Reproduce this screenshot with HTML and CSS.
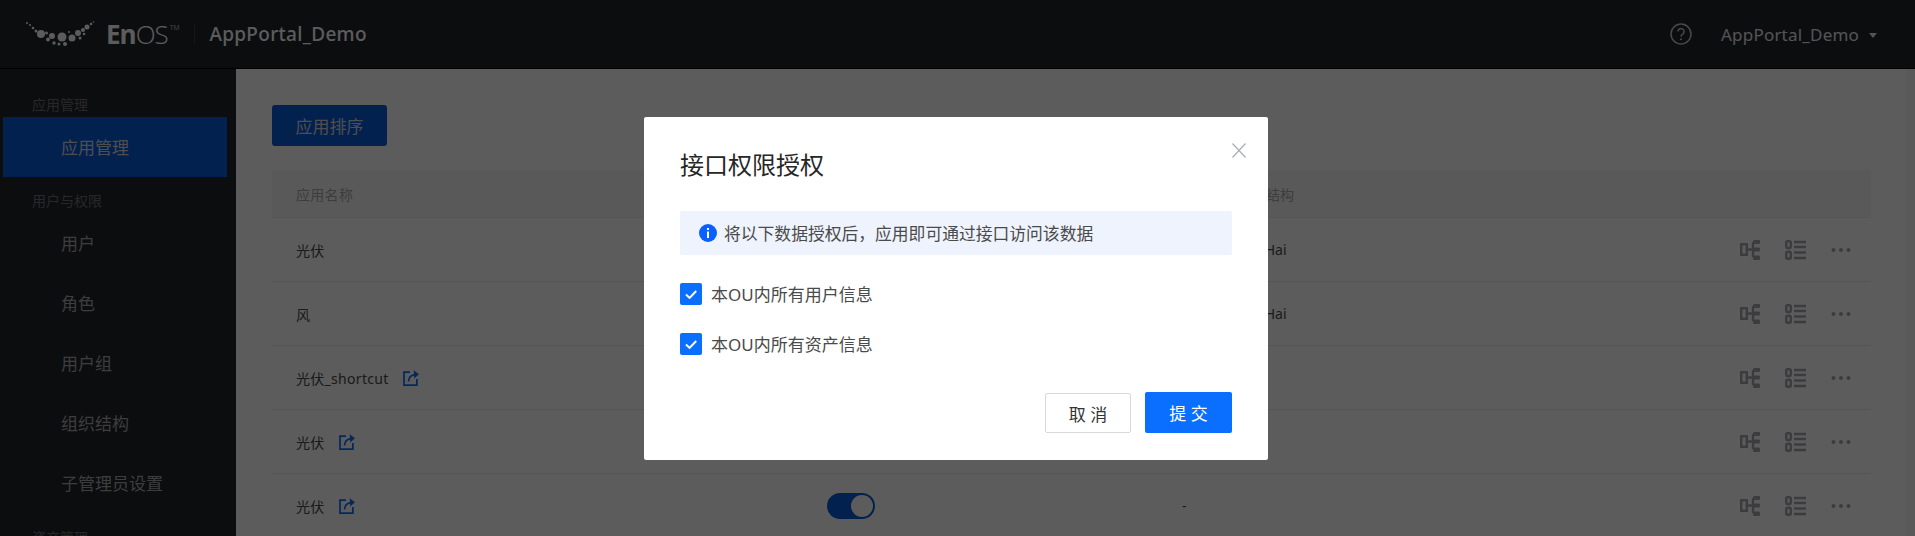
FILE: index.html
```html
<!DOCTYPE html>
<html lang="zh-CN">
<head>
  <meta charset="UTF-8">
  <title>EnOS AppPortal_Demo</title>
  <link rel="stylesheet" href="styles.css">
</head>
<body>

<header class="topbar">
  <div class="brand">
    <svg class="brand-mark" viewBox="0 0 70 26" width="70" height="26">
      <g fill="#fff">
        <circle cx="2" cy="2" r="1"/><circle cx="5" cy="4" r="1"/><circle cx="8" cy="7" r="1.300"/>
        <circle cx="11" cy="10" r="1.500"/><circle cx="16" cy="13" r="4"/><circle cx="21.500" cy="12" r="1.500"/>
        <circle cx="27" cy="15" r="3"/><circle cx="23" cy="18.500" r="2"/><circle cx="29" cy="22" r="1.700"/>
        <circle cx="34" cy="23" r="1.500"/><circle cx="37" cy="16" r="4.500"/><circle cx="40" cy="23" r="2"/>
        <circle cx="47" cy="17" r="3.500"/><circle cx="44" cy="11" r="1"/><circle cx="53" cy="12" r="3"/>
        <circle cx="55" cy="17" r="1.500"/><circle cx="59" cy="13" r="1.300"/><circle cx="58" cy="9" r="2"/>
        <circle cx="62" cy="6" r="2.500"/><circle cx="66" cy="3" r="1.300"/><circle cx="68.500" cy="1" r="0.800"/>
      </g>
    </svg>
    <span class="brand-name"><b>En</b>OS<sup>TM</sup></span>
    <span class="brand-line"></span>
    <span class="brand-app">AppPortal_Demo</span>
  </div>
  <div class="account">
    <svg class="help" viewBox="0 0 22 22" width="22" height="22">
      <circle cx="11" cy="11" r="10" fill="none" stroke="#fff" stroke-width="1.500"/>
      <path d="M8 8.600a3 3 0 1 1 4.600 2.500c-1 .7-1.600 1.200-1.600 2.600" fill="none" stroke="#fff" stroke-width="1.500"/>
      <circle cx="11" cy="16.300" r="1" fill="#fff"/>
    </svg>
    <span class="account-name">AppPortal_Demo</span>
    <span class="caret"></span>
  </div>
</header>

<div class="page">
  <aside class="sidebar">
    <ul class="nav">
      <li class="nav-group nav-first">应用管理</li>
      <li class="nav-item active">应用管理</li>
      <li class="nav-group">用户与权限</li>
      <li class="nav-item">用户</li>
      <li class="nav-item">角色</li>
      <li class="nav-item">用户组</li>
      <li class="nav-item">组织结构</li>
      <li class="nav-item">子管理员设置</li>
      <li class="nav-group">资产管理</li>
    </ul>
  </aside>

  <main class="content">
    <button class="btn-sort">应用排序</button>
    <div class="table" id="table">
      <div class="row row-head">
        <div class="cell-name">应用名称</div>
        <div class="cell-state">状态</div>
        <div class="cell-org">应用所属组织结构</div>
        <div class="cell-ops"></div>
      </div>
    </div>
  </main>
  <div class="scrollbar"></div>
</div>

<div class="mask"></div>

<div class="dialog">
  <svg class="dialog-close" viewBox="0 0 14 15" width="14" height="15">
    <path d="M.5.5l13 14M13.500.5l-13 14" fill="none" stroke="#a8adb8" stroke-width="1.200"/>
  </svg>
  <h2 class="dialog-title">接口权限授权</h2>
  <div class="notice">
    <svg viewBox="0 0 18 18" width="18" height="18">
      <circle cx="9" cy="9" r="9" fill="#0a5fff"/>
      <rect x="8" y="4" width="2" height="2" fill="#fff"/>
      <rect x="8" y="7.500" width="2" height="6.500" fill="#fff"/>
    </svg>
    <span>将以下数据授权后，应用即可通过接口访问该数据</span>
  </div>
  <label class="check">
    <span class="check-box">
      <svg viewBox="0 0 22 22" width="22" height="22"><path d="M6 11.500l3.600 3.400L16.200 8" fill="none" stroke="#fff" stroke-width="2"/></svg>
    </span>
    <span class="check-text">本OU内所有用户信息</span>
  </label>
  <label class="check">
    <span class="check-box">
      <svg viewBox="0 0 22 22" width="22" height="22"><path d="M6 11.500l3.600 3.400L16.200 8" fill="none" stroke="#fff" stroke-width="2"/></svg>
    </span>
    <span class="check-text">本OU内所有资产信息</span>
  </label>
  <div class="dialog-foot">
    <button class="btn btn-cancel">取 消</button>
    <button class="btn btn-submit">提 交</button>
  </div>
</div>

<script>
  const rows = [
    { name: "光伏", link: false, org: "Envision_HaiHai" },
    { name: "风", link: false, org: "Envision_HaiHai" },
    { name: "光伏_shortcut", link: true, org: "-" },
    { name: "光伏", link: true, org: "-" },
    { name: "光伏", link: true, org: "-" }
  ];

  const linkIcon = `<svg class="link" viewBox="0 0 16 16" width="16" height="16">
    <path d="M7 2.200H1v12.900h12.900V9" fill="none" stroke="#0a6fff" stroke-width="1.700"/>
    <path d="M5.500 11.500C5.800 7.500 8.500 5 12 4.700" fill="none" stroke="#0a6fff" stroke-width="1.700"/>
    <path d="M10.800 .3L16 4.200 11.200 8.500z" fill="#0a6fff"/>
  </svg>`;

  const opsIcons = `
    <svg viewBox="0 0 20 20" width="20" height="20">
      <g fill="none" stroke="#a5a6ad" stroke-width="2.400">
        <rect x="1.200" y="4.200" width="5.600" height="10.600"/>
        <path d="M7 9.500h6M13 2v15"/>
      </g>
      <g fill="#a5a6ad">
        <rect x="13" y="0" width="7" height="4" rx="1"/>
        <rect x="13" y="7.500" width="7" height="4" rx="1"/>
        <rect x="13" y="15.500" width="7" height="4.500" rx="1"/>
      </g>
    </svg>
    <svg viewBox="0 0 21 20" width="21" height="20">
      <g fill="none" stroke="#a5a6ad" stroke-width="2.400">
        <rect x="1.200" y="1.200" width="4.600" height="6.800" rx="1.500"/>
        <rect x="1.200" y="11.800" width="4.600" height="7" rx="1.500"/>
      </g>
      <path d="M9 2h12M9 7h12M9 12.500h12M9 18h12" stroke="#a5a6ad" stroke-width="2.400"/>
    </svg>
    <svg viewBox="0 0 20 20" width="20" height="20">
      <g fill="#a5a6ad"><circle cx="2.500" cy="10" r="2"/><circle cx="10" cy="10" r="2"/><circle cx="17.500" cy="10" r="2"/></g>
    </svg>`;

  const table = document.getElementById("table");
  rows.forEach((r) => {
    const div = document.createElement("div");
    div.className = "row";
    div.innerHTML = `
      <div class="cell-name">${r.name}${r.link ? linkIcon : ""}</div>
      <div class="cell-state"><span class="toggle"></span></div>
      <div class="cell-org">${r.org}</div>
      <div class="cell-ops">${opsIcons}</div>`;
    table.appendChild(div);
  });
</script>

</body>
</html>
```

FILE: styles.css
```css
* {
  box-sizing: border-box;
}

html, body {
  height: 100%;
}

body {
  margin: 0;
  overflow: hidden;
  background: #fff;
  color: #4a4a4a;
  font-family: "Noto Sans", "Noto Sans CJK SC", sans-serif;
  font-size: 14px;
}

.topbar {
  height: 69px;
  background: #22252c;
  border-bottom: 1px solid #000;
  display: flex;
  align-items: center;
  justify-content: space-between;
  padding: 0 38px 0 25px;
  color: #fff;
}

.brand,
.account {
  display: flex;
  align-items: center;
}

.brand-name {
  margin-left: 11px;
  font-family: "Open Sans", sans-serif;
  font-size: 26px;
  font-weight: 300;
  letter-spacing: -1px;
  line-height: 30px;
  color: #fff;
}

.brand-name b {
  font-weight: 700;
}

.brand-name sup {
  font-size: 7px;
  letter-spacing: 0;
  vertical-align: 14px;
  line-height: 0;
  margin-left: 2px;
}

.brand-line {
  width: 1px;
  height: 20px;
  margin: 0 14px 0 15px;
  background: #3a3d45;
}

.brand-app {
  font-size: 19px;
  font-weight: 500;
  letter-spacing: 0.3px;
  color: #fff;
}

.help {
  opacity: 0.75;
  margin-right: 29px;
}

.account-name {
  font-size: 17px;
  letter-spacing: 0.2px;
  color: #e8e8e8;
}

.caret {
  width: 0;
  height: 0;
  margin: 3px 0 0 10px;
  border-left: 4.500px solid transparent;
  border-right: 4.500px solid transparent;
  border-top: 5px solid #e8e8e8;
}

.page {
  display: flex;
  height: calc(100% - 69px);
}

.sidebar {
  width: 236px;
  flex: none;
  background: #22252c;
  padding-right: 9px;
}

.nav {
  list-style: none;
  margin: 0;
  padding: 0;
}

.nav-group {
  height: 37px;
  padding: 14px 0 0 32px;
  line-height: 20px;
  color: #707070;
}

.nav-first {
  height: 48px;
  padding-top: 26px;
}

.nav-item {
  height: 60px;
  line-height: 60px;
  margin-left: 3px;
  padding-left: 58px;
  font-size: 17px;
  color: #a8a8a8;
}

.nav-item.active {
  line-height: 62px;
  background: #0a5cd8;
  color: #d8d8d8;
}

.content {
  flex: 1;
  padding: 36px 36px 0;
  min-width: 0;
}

.scrollbar {
  width: 8px;
  flex: none;
  background: #f7f7f7;
}

.btn-sort {
  display: block;
  width: 115px;
  height: 41px;
  padding: 0;
  border: none;
  border-radius: 3px;
  background: #0a5cd8;
  color: #d8d8d8;
  font-family: inherit;
  font-size: 17px;
}

.table {
  margin-top: 24px;
}

.row {
  display: grid;
  grid-template-columns: 531px 355px 1fr 131px;
  align-items: center;
  height: 64px;
  padding-left: 24px;
  border-bottom: 1px solid #ececec;
}

.row-head {
  height: 48px;
  background: #f7f7f7;
  color: #a8a8a8;
}

.cell-name {
  display: flex;
  align-items: center;
  letter-spacing: 0.3px;
}

.link {
  margin-left: 14px;
}

.toggle {
  display: block;
  position: relative;
  width: 48px;
  height: 26px;
  border-radius: 13px;
  background: #0a5cd8;
}

.toggle::after {
  content: "";
  position: absolute;
  top: 2px;
  right: 2px;
  width: 22px;
  height: 22px;
  border-radius: 50%;
  background: #fff;
}

.cell-ops {
  display: flex;
  align-items: center;
  gap: 25px;
}

.mask {
  position: fixed;
  inset: 0;
  background: rgba(0, 0, 0, 0.64);
}

.dialog {
  position: fixed;
  left: 644px;
  top: 117px;
  width: 624px;
  height: 343px;
  padding: 0 36px;
  background: #fff;
  border-radius: 2px;
  color: #4a4a4a;
}

.dialog-close {
  position: absolute;
  top: 26px;
  right: 22px;
}

.dialog-title {
  margin: 0;
  padding-top: 31px;
  font-size: 24px;
  font-weight: 400;
  line-height: 34px;
  color: #262626;
}

.notice {
  display: flex;
  align-items: center;
  gap: 7px;
  height: 44px;
  margin-top: 29px;
  padding-left: 19px;
  border-radius: 2px;
  background: #eef3fd;
  font-size: 16.800px;
}

.check {
  display: flex;
  align-items: center;
  gap: 9px;
  height: 22px;
  margin-top: 28px;
  font-size: 17px;
}

.check-box {
  width: 22px;
  height: 22px;
  border-radius: 2px;
  background: #0a6fff;
}

.check-box svg {
  display: block;
}

.check-text {
  margin-top: -2px;
}

.dialog-foot {
  display: flex;
  justify-content: flex-end;
  align-items: flex-end;
  gap: 14px;
  margin-top: 37px;
}

.btn {
  height: 41px;
  border-radius: 2px;
  font-family: inherit;
  font-size: 17px;
  padding: 0;
}

.btn-cancel {
  width: 86px;
  height: 40px;
  border: 1px solid #d9d9d9;
  background: #fff;
  color: #333;
}

.btn-submit {
  width: 87px;
  border: none;
  background: #0a6fff;
  color: #fff;
}
```
